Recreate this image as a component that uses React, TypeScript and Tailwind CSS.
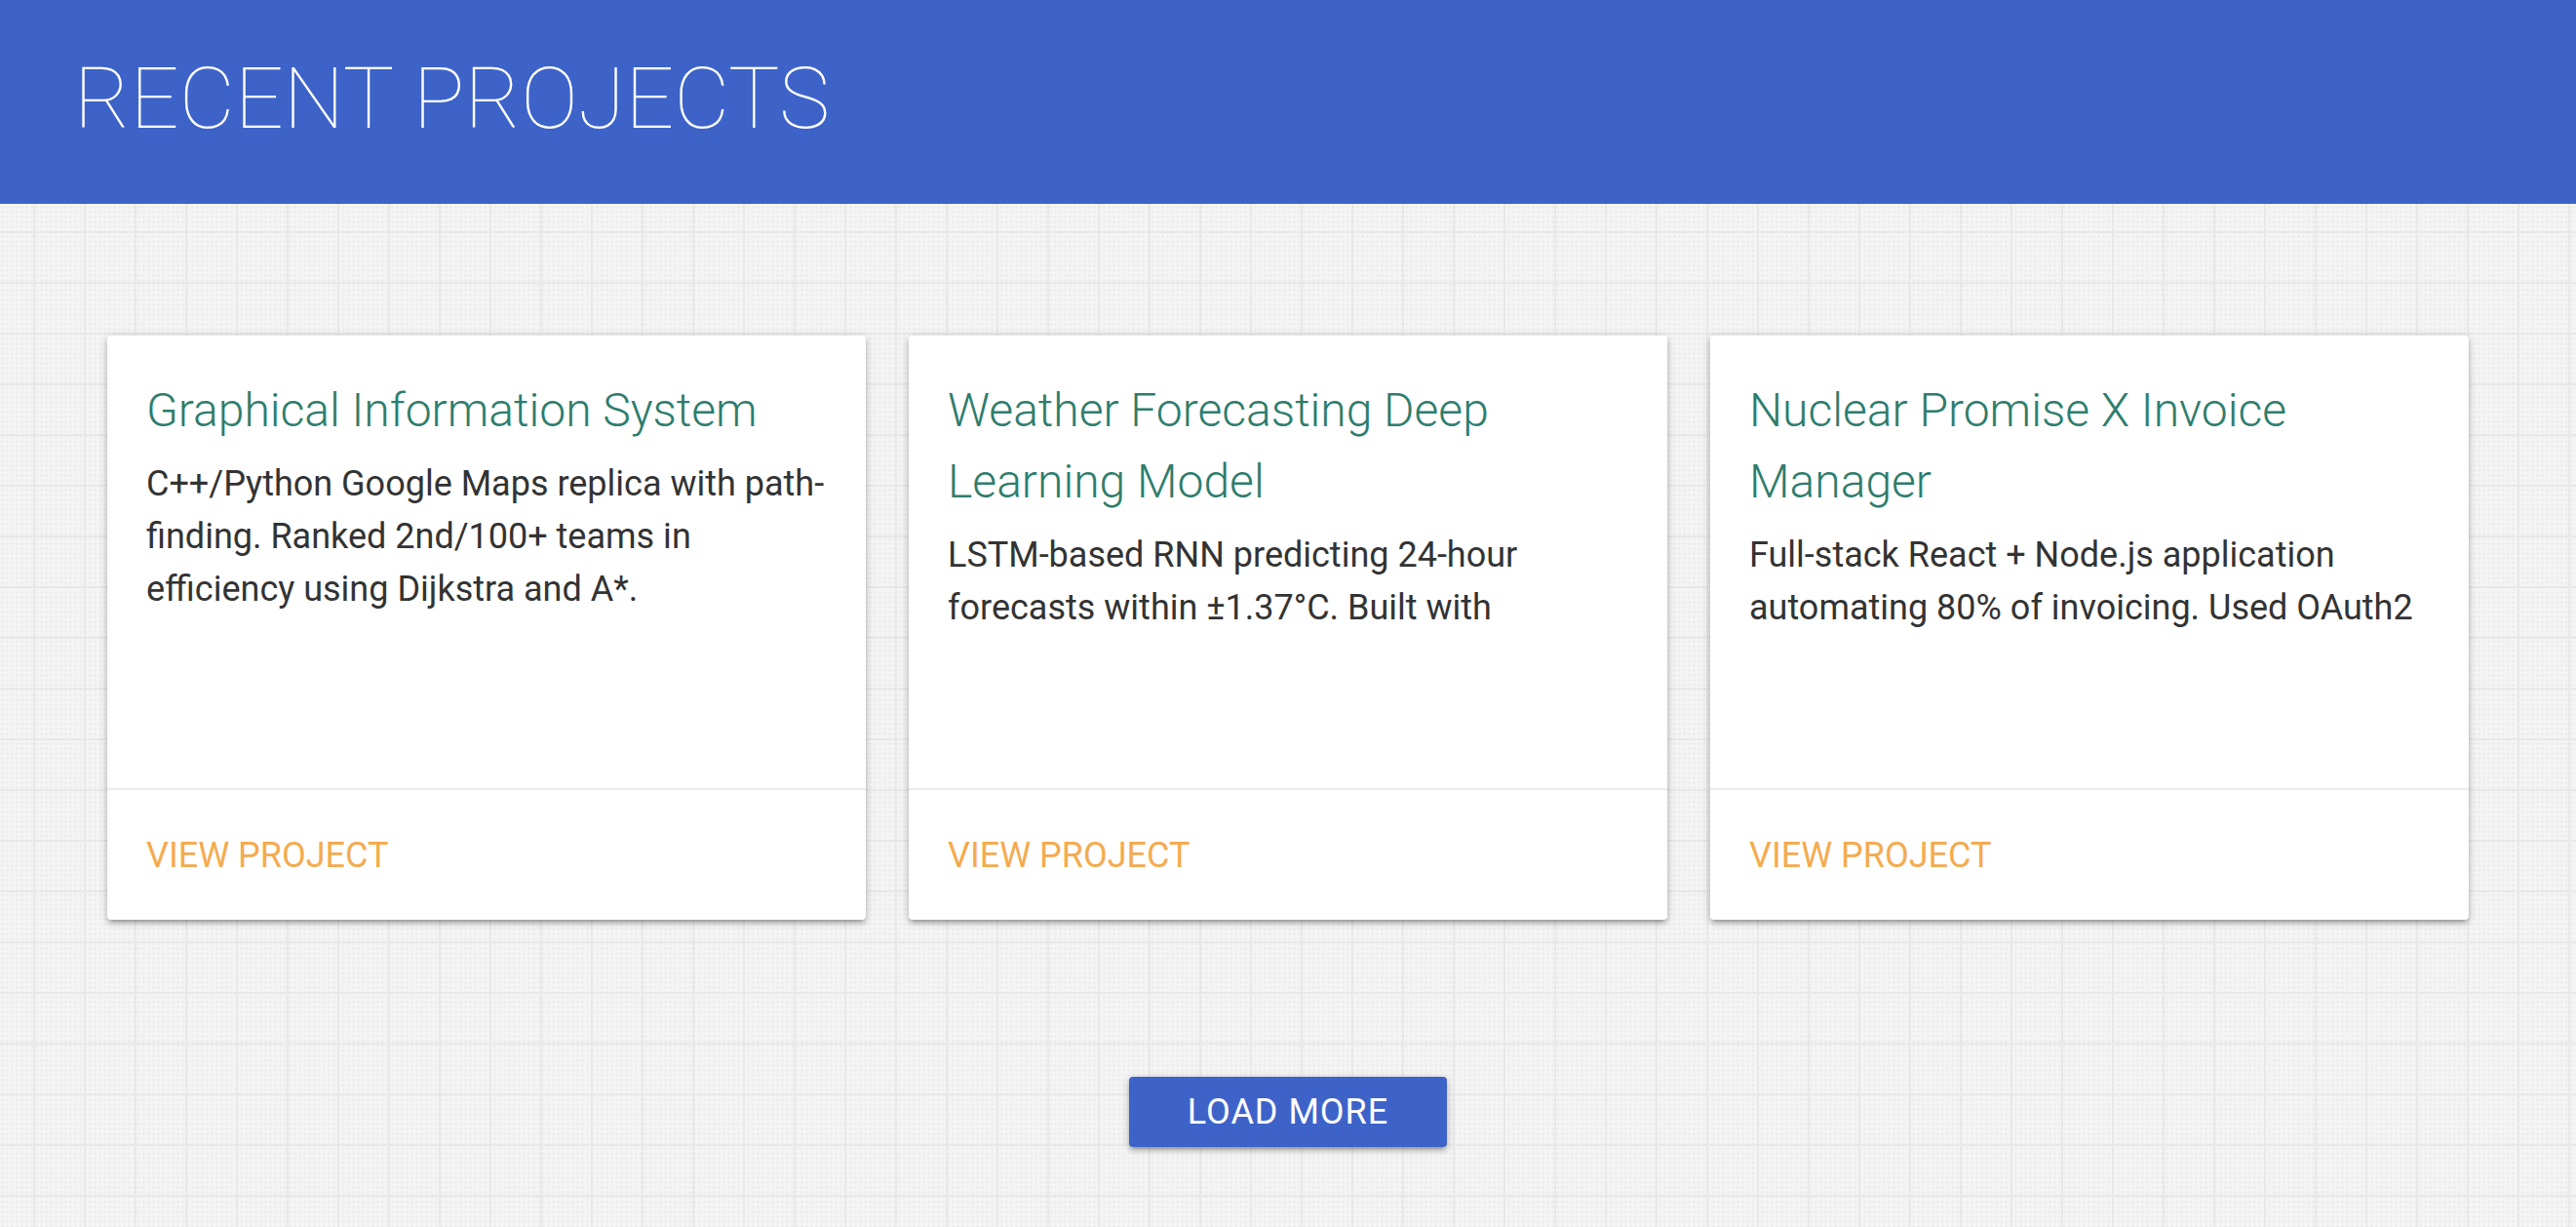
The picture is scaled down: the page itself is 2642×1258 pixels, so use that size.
const projects = [
  {
    title: 'Graphical Information System',
    desc: 'C++/Python Google Maps replica with path-finding. Ranked 2nd/100+ teams in efficiency using Dijkstra and A*.',
  },
  {
    title: 'Weather Forecasting Deep Learning Model',
    desc: 'LSTM-based RNN predicting 24-hour forecasts within ±1.37°C. Built with',
  },
  {
    title: 'Nuclear Promise X Invoice Manager',
    desc: 'Full-stack React + Node.js application automating 80% of invoicing. Used OAuth2',
  },
];

function ProjectCard({ title, desc }: { title: string; desc: string }) {
  return (
    <div className="flex h-[599px] w-[778px] flex-col rounded-[4px] bg-white shadow-[0_4px_4px_0_rgba(0,0,0,0.14),0_6px_2px_-4px_rgba(0,0,0,0.12),0_2px_10px_0_rgba(0,0,0,0.2)]">
      {/* Content */}
      <div className="flex-1 pl-[40px] pr-[36px] pt-[40px]">
        <div className="max-h-[272px] overflow-hidden">
          <h2 className="text-[48px] font-light leading-[73px] text-[#2e7d6d]">{title}</h2>
          <p className="mt-[12px] text-[36px] leading-[54px] text-[#333333]">{desc}</p>
        </div>
      </div>

      {/* Action */}
      <div className="flex h-[135px] items-center border-t-2 border-[#ececec] px-[40px]">
        <a href="#" className="text-[36px] uppercase leading-none text-[#f4ab4f]">
          View Project
        </a>
      </div>
    </div>
  );
}

export default function App() {
  return (
    <div className="min-h-screen bg-[#f4f4f4] bg-[linear-gradient(to_right,#e8e8e8_2px,transparent_2px),linear-gradient(to_bottom,#e8e8e8_2px,transparent_2px),radial-gradient(#ebebeb_1px,transparent_1.3px)] font-['Roboto',sans-serif] [background-position:34px_29px,34px_29px,0_0] [background-size:52px_52px,52px_52px,5px_5px]">
      {/* Header */}
      <header className="h-[209px] bg-[#3d63c9] pl-[76px] pt-[57px]">
        <h1 className="text-[88px] font-thin leading-none text-white">RECENT PROJECTS</h1>
      </header>

      {/* Cards */}
      <section className="flex justify-center gap-[44px] pt-[135px]">
        {projects.map((p) => (
          <ProjectCard key={p.title} title={p.title} desc={p.desc} />
        ))}
      </section>

      {/* Load more */}
      <div className="flex justify-center pb-[82px] pt-[161px]">
        <button className="h-[72px] w-[326px] rounded-[4px] bg-[#3d63c9] text-[36px] uppercase leading-none tracking-[1px] text-white shadow-[0_4px_4px_0_rgba(0,0,0,0.14),0_6px_2px_-4px_rgba(0,0,0,0.12),0_2px_10px_0_rgba(0,0,0,0.2)]">
          Load More
        </button>
      </div>
    </div>
  );
}
